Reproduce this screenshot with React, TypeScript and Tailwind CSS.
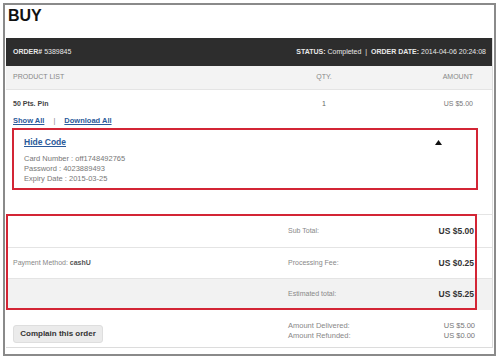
import React from "react";

export default function App() {
  const f = { fontFamily: '"Liberation Sans", Arial, sans-serif' };
  return (
    <div className="w-[499px] h-[360px] bg-white overflow-hidden" style={f}>
      <div className="ml-[3px] mt-[3px] w-[493px] h-[353px] border-2 border-[#8a8a8a] flex flex-col">
        <div className="h-[33px] pl-[3px] pt-[1px] text-[16px] leading-[20px] font-bold text-[#111]">BUY</div>
        <div className="ml-[1px] mr-[1px] flex-1 flex flex-col border-r border-b border-[#dcdcdc]">
          {/* dark order bar */}
          <div className="h-[28px] bg-[#2d2d2d] flex items-center justify-between pl-[7px] pr-[6px] text-[7px] text-[#e8e8e8]">
            <div>
              <span className="font-bold">ORDER#</span> 5389845
            </div>
            <div>
              <span className="font-bold">STATUS:</span> Completed &nbsp;|&nbsp; <span className="font-bold">ORDER DATE:</span> 2014-04-06 20:24:08
            </div>
          </div>
          {/* header */}
          <div className="h-[24px] bg-[#f3f3f3] border-b border-[#e4e4e4] flex items-center pl-[7px] pr-[17px] text-[7px] text-[#888]">
            <div className="w-[271px]">PRODUCT LIST</div>
            <div className="w-[80px] text-center">QTY.</div>
            <div className="w-[109px] text-right">AMOUNT</div>
          </div>
          {/* product row */}
          <div className="h-[24px] flex items-center pl-[7px] pr-[17px] pt-[4px] text-[7px] text-[#444]">
            <div className="w-[271px] font-semibold text-[#444]">50 Pts. Pin</div>
            <div className="w-[80px] text-center text-[#666]">1</div>
            <div className="w-[109px] text-right text-[#777]">US $5.00</div>
          </div>
          <div className="h-[14px] flex items-center pl-[7px] text-[7.5px] font-bold text-[#2a5a9a]">
            <span className="underline">Show All</span>
            <span className="mx-[9px] text-[#888] font-normal">|</span>
            <span className="underline">Download All</span>
          </div>
          {/* red box 1 */}
          <div className="ml-[6px] mr-[14px] h-[62px] border-2 border-[#d32535] pl-[10px] pr-[34px] pt-[7px] flex flex-col">
            <div className="flex items-center justify-between h-[11px]">
              <span className="text-[8.5px] font-bold text-[#2a5a9a] underline">Hide Code</span>
              <svg width="7" height="5" viewBox="0 0 7 5"><polygon points="3.5,0 7,5 0,5" fill="#111" /></svg>
            </div>
            <div className="mt-[6px] text-[7.5px] leading-[10px] text-[#777]">
              <div>Card Number : off1748492765</div>
              <div>Password : 4023889493</div>
              <div>Expiry Date : 2015-03-25</div>
            </div>
          </div>
          <div className="h-[24px]" />
          {/* totals */}
          <div className="relative">
            <div className="h-[33px] border-t border-[#e4e4e4] flex items-center pr-[18px]">
              <div className="w-[282px]" />
              <div className="flex-1 text-[7px] text-[#888]">Sub Total:</div>
              <div className="text-[8.5px] font-bold text-[#333]">US $5.00</div>
            </div>
            <div className="h-[31px] border-t border-[#e4e4e4] flex items-center pl-[7px] pr-[18px]">
              <div className="w-[275px] text-[7px] text-[#888]">
                Payment Method: <span className="font-bold text-[#555]">cashU</span>
              </div>
              <div className="flex-1 text-[7px] text-[#888]">Processing Fee:</div>
              <div className="text-[8.5px] font-bold text-[#333]">US $0.25</div>
            </div>
            <div className="h-[32px] border-t border-[#e4e4e4] bg-[#f2f2f2] flex items-center pr-[18px]">
              <div className="w-[282px]" />
              <div className="flex-1 text-[7px] text-[#888]">Estimated total:</div>
              <div className="text-[8.5px] font-bold text-[#333]">US $5.25</div>
            </div>
            <div className="absolute left-0 top-0 w-[471px] h-[96px] border-2 border-[#d32535] pointer-events-none" />
          </div>
          {/* bottom */}
          <div className="flex items-start pl-[7px] pr-[17px] pt-[9px]">
            <div className="w-[275px]">
              <button className="w-[90px] h-[18px] rounded-[3px] bg-[#ebebeb] border border-[#dedede] text-[8px] font-bold text-[#333]">
                Complain this order
              </button>
            </div>
            <div className="flex-1 pt-[2px] text-[7.5px] leading-[10px] text-[#888]">
              <div>Amount Delivered:</div>
              <div>Amount Refunded:</div>
            </div>
            <div className="pt-[2px] text-[7.5px] leading-[10px] text-[#777] text-right">
              <div>US $5.00</div>
              <div>US $0.00</div>
            </div>
          </div>
        </div>
        <div className="h-[6px]" />
      </div>
    </div>
  );
}
